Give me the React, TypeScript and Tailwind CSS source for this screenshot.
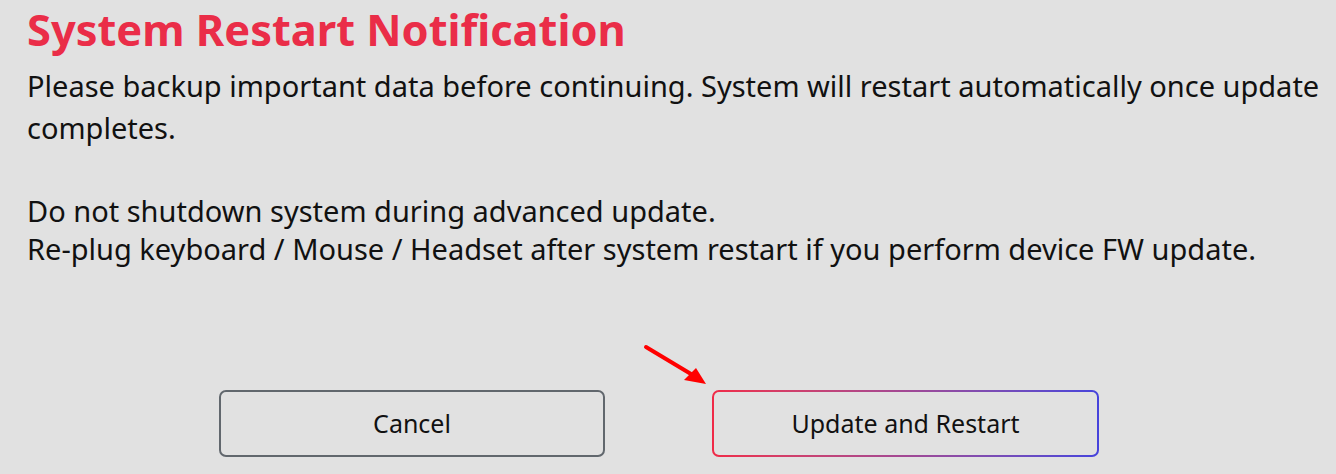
export default function App() {
  return (
    <div className="relative w-[1336px] h-[474px] overflow-hidden bg-[#e1e1e1] pl-[27px] font-['Noto_Sans',sans-serif] text-[#111]">
      <h1 className="pt-[2px] text-[43.4px] font-bold leading-[56px] text-[#ea2d48]">
        System Restart Notification
      </h1>

      <p className="mt-[7px] w-[1300px] text-[29px] leading-[42px]">
        Please backup important data before continuing. System will restart automatically once update completes.
      </p>

      <div className="mt-[43px] text-[29px] leading-[38px]">
        <p>Do not shutdown system during advanced update.</p>
        <p>Re-plug keyboard / Mouse / Headset after system restart if you perform device FW update.</p>
      </div>

      <div className="mt-[122px] ml-[192px] flex gap-[107px]">
        <button className="w-[386px] h-[67px] rounded-[7px] border-2 border-[#61676d] text-[25px] text-[#111]">
          Cancel
        </button>
        <div className="w-[387px] h-[67px] rounded-[7px] bg-gradient-to-r from-[#f02a47] via-[#a24894] to-[#4643dc] p-[2px]">
          <button className="w-full h-full rounded-[5px] bg-[#e1e1e1] text-[25px] text-[#111]">
            Update and Restart
          </button>
        </div>
      </div>

      {/* arrow pointing at the update button */}
      <svg className="absolute left-[640px] top-[340px]" width="72" height="50" viewBox="0 0 72 50">
        <line x1="6" y1="7" x2="56" y2="37" stroke="#f00" strokeWidth="4" strokeLinecap="round" />
        <polygon points="66,44 44,40 56,28" fill="#f00" />
      </svg>
    </div>
  );
}
